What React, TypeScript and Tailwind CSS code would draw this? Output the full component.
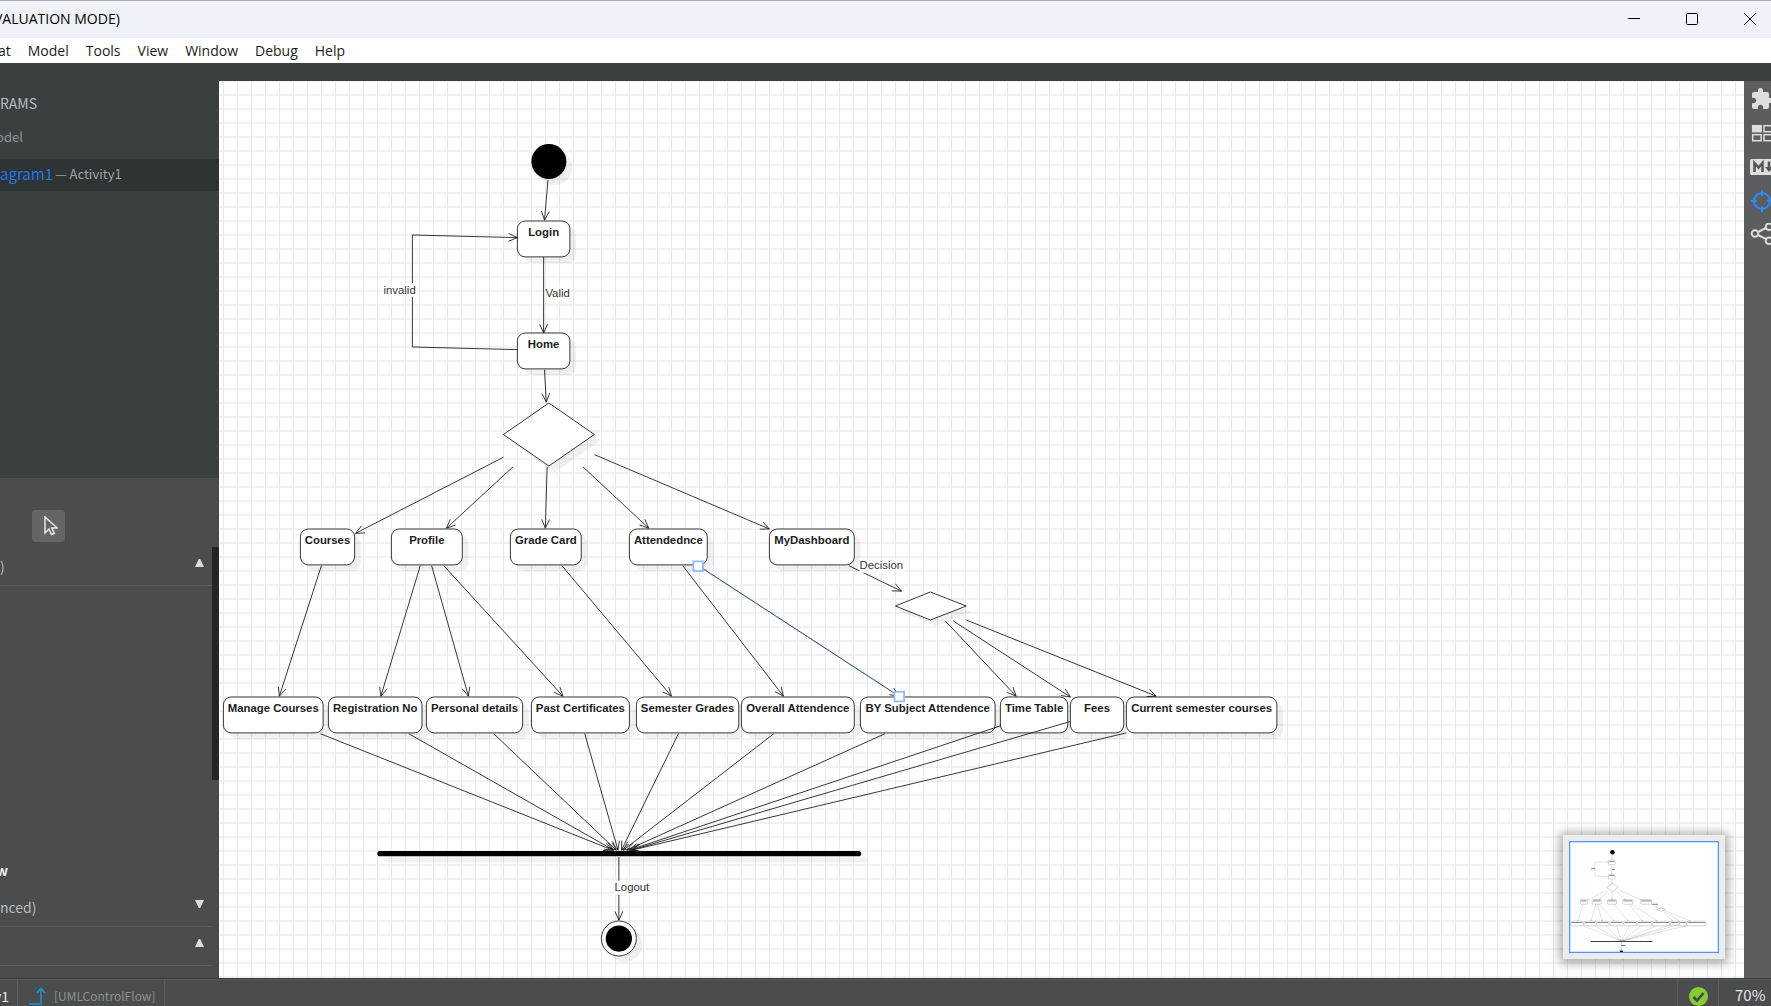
import { MdExtension } from "react-icons/md";

type NodeBox = { label: string; x: number; y: number; w: number };
type Point = [number, number];

const NODE_H = 41;

const nodes: NodeBox[] = [
  { label: "Login", x: 341, y: 160, w: 60 },
  { label: "Home", x: 341, y: 288, w: 60 },
  { label: "Courses", x: 93, y: 512, w: 62 },
  { label: "Profile", x: 197, y: 512, w: 81 },
  { label: "Grade Card", x: 333, y: 512, w: 81 },
  { label: "Attendednce", x: 469, y: 512, w: 89 },
  { label: "MyDashboard", x: 629, y: 512, w: 97 },
  { label: "Manage Courses", x: 5, y: 704, w: 114 },
  { label: "Registration No", x: 125, y: 704, w: 107 },
  { label: "Personal details", x: 237, y: 704, w: 110 },
  { label: "Past Certificates", x: 357, y: 704, w: 112 },
  { label: "Semester Grades", x: 477, y: 704, w: 117 },
  { label: "Overall Attendence", x: 597, y: 704, w: 129 },
  { label: "BY Subject Attendence", x: 733, y: 704, w: 154 },
  { label: "Time Table", x: 893, y: 704, w: 77 },
  { label: "Fees", x: 973, y: 704, w: 61 },
  { label: "Current semester courses", x: 1037, y: 704, w: 172 },
];

const edges: Point[][] = [
  [[376, 113], [372, 159]],
  [[371, 201], [371, 288]],
  [[372, 330], [374, 367]],
  [[341, 307], [221, 304], [221, 176], [341, 179]],
  [[325, 430], [156, 517]],
  [[336, 441], [260, 511]],
  [[375, 441], [373, 511]],
  [[416, 441], [491, 511]],
  [[429, 427], [629, 512]],
  [[720, 554], [780, 583]],
  [[830, 617], [911, 703]],
  [[839, 617], [973, 704]],
  [[854, 616], [1071, 703]],
  [[117, 554], [69, 703]],
  [[230, 554], [185, 703]],
  [[243, 554], [285, 703]],
  [[257, 554], [393, 703]],
  [[392, 554], [517, 703]],
  [[530, 554], [645, 703]],
  [[548, 554], [777, 703]],
  [[116, 746], [450, 879]],
  [[217, 746], [451, 879]],
  [[314, 746], [454, 879]],
  [[418, 746], [456, 879]],
  [[525, 746], [460, 879]],
  [[634, 746], [462, 879]],
  [[761, 746], [466, 879]],
  [[893, 737], [469, 879]],
  [[973, 732], [471, 879]],
  [[1037, 745], [472, 879]],
  [[457, 887], [457, 959]],
];

const labels = [
  { text: "invalid", x: 188, y: 243, w: 38 },
  { text: "Valid", x: 373, y: 247, w: 28 },
  { text: "Decision", x: 732, y: 558, w: 50 },
  { text: "Logout", x: 452, y: 926, w: 41 },
];

function arrowHead(points: Point[]) {
  const [x1, y1] = points[points.length - 2];
  const [x2, y2] = points[points.length - 1];
  const len = Math.hypot(x2 - x1, y2 - y1);
  const ux = (x2 - x1) / len;
  const uy = (y2 - y1) / len;
  const bx = x2 - ux * 10;
  const by = y2 - uy * 10;
  return `${bx - uy * 4.5},${by + ux * 4.5} ${x2},${y2} ${bx + uy * 4.5},${by - ux * 4.5}`;
}

function Shapes({ mini = false }: { mini?: boolean }) {
  const stroke = mini ? "#808080" : "#1c1c1c";
  const sw = mini ? 3 : 1;
  return (
    <>
      {!mini && (
        <g fill="#000" fillOpacity={0.06} transform="translate(7 7)">
          <circle cx={377} cy={92} r={20} />
          <circle cx={457} cy={980} r={20} />
          <polygon points="325,404 377,368 429,404 377,440" />
          <polygon points="773,600 813,584 854,600 813,616" />
          <rect x={181} y={880} width={553} height={6} rx={3} />
        </g>
      )}
      <circle cx={377} cy={92} r={20} />
      <g fill="#fff" stroke={stroke} strokeWidth={sw}>
        <polygon points="325,404 377,368 429,404 377,440" />
        <polygon points="773,600 813,584 854,600 813,616" />
        <circle cx={457} cy={980} r={20} />
      </g>
      <circle cx={457} cy={980} r={15} />
      <rect x={181} y={880} width={553} height={6} rx={3} />
      {nodes.map((n) => (
        <g key={n.label}>
          {!mini && (
            <rect x={n.x + 7} y={n.y + 7} width={n.w} height={NODE_H} rx={9} fill="#000" fillOpacity={0.06} />
          )}
          <rect x={n.x} y={n.y} width={n.w} height={NODE_H} rx={9} fill="#fff" stroke={stroke} strokeWidth={sw} />
          {mini ? (
            <rect x={n.x + 7} y={n.y + 9} width={n.w - 14} height={6} fill="#555" />
          ) : (
            <text x={n.x + n.w / 2} y={n.y + 17} textAnchor="middle" fontSize={13} fontWeight={700} fill="#1c1c1c">
              {n.label}
            </text>
          )}
        </g>
      ))}
      <g fill="none" stroke={stroke} strokeWidth={mini ? 2 : 1}>
        {edges.map((e, i) => (
          <g key={i}>
            <polyline points={e.map((p) => p.join(",")).join(" ")} />
            <polyline points={arrowHead(e)} />
          </g>
        ))}
      </g>
      {labels.map((l) =>
        mini ? (
          <rect key={l.text} x={l.x} y={l.y - 8} width={l.w} height={6} fill="#444" />
        ) : (
          <g key={l.text}>
            <rect x={l.x} y={l.y - 12} width={l.w} height={16} fill="#fff" />
            <text x={l.x} y={l.y} fontSize={13} fill="#333">
              {l.text}
            </text>
          </g>
        )
      )}
    </>
  );
}

function Canvas() {
  return (
    <main className="relative min-w-0 flex-1 overflow-hidden bg-white bg-[linear-gradient(to_right,#e9e9e9_1px,transparent_1px),linear-gradient(to_bottom,#f2f2f2_2px,transparent_2px)] bg-[size:14px_14px] bg-[position:4px_13px]">
      <svg className="block h-full w-full font-['Liberation_Sans',Arial,sans-serif]" role="img" aria-label="Activity diagram">
        <g transform="scale(0.875)">
          <Shapes />
          <line x1={548} y1={554} x2={777} y2={703} stroke="#3b82f6" strokeWidth={1} strokeDasharray="4 3" />
          <g fill="#fff" stroke="#8fbcf8" strokeWidth={2}>
            <rect x={542} y={549} width={11} height={11} />
            <rect x={772} y={698} width={11} height={11} />
          </g>
        </g>
      </svg>
      <div className="absolute right-[19px] bottom-[19px] h-[124px] w-[162px] bg-[#ececec] p-1.5 shadow-[0_1px_10px_3px_rgba(0,0,0,0.35)]">
        <div className="h-full border border-[#4b95ff] bg-white ring-1 ring-[#cfe2ff] ring-inset">
          <svg className="block h-full w-full" viewBox="0 0 1316 978" preserveAspectRatio="xMinYMin slice" aria-hidden="true">
            <Shapes mini />
          </svg>
        </div>
      </div>
    </main>
  );
}

function TitleBar() {
  return (
    <header className="flex h-[38px] shrink-0 items-center justify-between overflow-hidden border-t border-[#a9a9a9] bg-[#f0f2fa] pb-px font-['Open_Sans','Noto_Sans',sans-serif]">
      <h1 className="-ml-1.5 text-sm whitespace-nowrap text-black">VALUATION MODE)</h1>
      <div className="flex h-full text-black">
        <button aria-label="Minimize" className="flex w-[58px] items-center justify-center">
          <svg width="12" height="12" viewBox="0 0 12 12" stroke="currentColor">
            <path d="M0 5.5h12" />
          </svg>
        </button>
        <button aria-label="Maximize" className="flex w-[58px] items-center justify-center">
          <svg width="12" height="12" viewBox="0 0 12 12" fill="none" stroke="currentColor">
            <rect x="0.5" y="0.5" width="11" height="11" rx="1" />
          </svg>
        </button>
        <button aria-label="Close" className="-mr-2 flex w-[58px] items-center justify-center">
          <svg width="12" height="12" viewBox="0 0 12 12" stroke="currentColor">
            <path d="M0 0l12 12M12 0L0 12" />
          </svg>
        </button>
      </div>
    </header>
  );
}

function MenuBar() {
  return (
    <nav className="-ml-0.5 flex h-[25px] shrink-0 items-center gap-[17px] bg-white font-['Open_Sans','Noto_Sans',sans-serif] text-sm text-[#1b1b1b]">
      {["at", "Model", "Tools", "View", "Window", "Debug", "Help"].map((m) => (
        <button key={m}>{m}</button>
      ))}
    </nav>
  );
}

function Triangle({ down = false }: { down?: boolean }) {
  return (
    <svg width="9" height="8" viewBox="0 0 9 8" fill="#dcdcdc" className="mr-2">
      <path d={down ? "M0 0h9L5.2 8H3.8z" : "M0 8h9L5.2 0H3.8z"} />
    </svg>
  );
}

function SectionHeader({ text, down }: { text: string; down?: boolean }) {
  return (
    <button className="flex h-[39px] w-full shrink-0 items-center justify-between border-b border-[#5a5c5e] pb-1.5">
      <span className="pt-1.5">{text}</span>
      <Triangle down={down} />
    </button>
  );
}

function Sidebar() {
  return (
    <aside className="flex w-[219px] shrink-0 flex-col overflow-hidden font-['Noto_Sans_CJK_SC',sans-serif] whitespace-nowrap">
      <section className="flex h-[397px] shrink-0 flex-col bg-[#3a3f41]">
        <h2 className="mt-1 flex h-9 items-center text-sm text-[#b9bbbb]">RAMS</h2>
        <div className="-ml-1 flex h-8 items-center text-[13px] text-[#939696]">odel</div>
        <button className="mt-1.5 flex h-8 items-center gap-0.5 bg-[#2e3333] pb-0.5 text-left">
          <span className="text-[15px] text-[#2277ee]">agram1</span>
          <span className="text-[13px] text-[#a0a3a3]">— Activity1</span>
        </button>
      </section>
      <section className="flex min-h-0 flex-1 flex-col bg-[#4b4c4d] text-sm text-[#b9bbbb]">
        <div className="h-[69px] shrink-0 px-8 pt-8">
          <button aria-label="Select" className="flex h-8 w-[33px] items-center justify-center rounded bg-[#626669] pl-1">
            <svg width="14" height="20" viewBox="0 0 14 20" fill="none" stroke="#e8e8e8" strokeWidth="1.5">
              <path d="M1 1v16l4-4 2.500 5.500 2.800-1.200-2.500-5.300H13.200z" />
            </svg>
          </button>
        </div>
        <div className="flex min-h-0 flex-1">
          <div className="flex flex-1 flex-col">
            <SectionHeader text=")" />
            <div className="-ml-1 flex h-[302px] items-end pb-2">
              <button className="font-bold text-[#eee]">w</button>
            </div>
            <SectionHeader text="nced)" down />
            <SectionHeader text="" />
          </div>
          <div className="w-[7px]">
            <div className="h-[233px] bg-[#252525]" />
          </div>
        </div>
      </section>
    </aside>
  );
}

function RightRail() {
  const cell = "flex h-[34px] shrink-0 items-center";
  return (
    <aside className="flex w-[27px] shrink-0 flex-col overflow-hidden bg-[#5c5d5f] pt-px pl-1.5 text-[#dedede]">
      <button aria-label="Extensions" className={cell}>
        <MdExtension size={24} className="shrink-0" />
      </button>
      <button aria-label="Layout" className={cell}>
        <svg width="24" height="24" viewBox="0 0 24 24" className="shrink-0" fill="none" stroke="currentColor" strokeWidth="1.500">
          <rect x="2.700" y="4.700" width="8.500" height="6" fill="currentColor" />
          <rect x="14" y="4.700" width="8.500" height="6" />
          <rect x="2.700" y="13.700" width="8.500" height="6" />
          <rect x="14" y="13.700" width="8.500" height="6" />
        </svg>
      </button>
      <button aria-label="Markdown" className={cell}>
        <svg width="26" height="24" viewBox="0 0 26 24" className="shrink-0">
          <rect x="0" y="4" width="26" height="16" rx="1.500" fill="currentColor" />
          <g fill="none" stroke="#55585a" strokeWidth="2.600">
            <path d="M4.500 17V8l4 4.500 4-4.500v9" />
            <path d="M19 6.500v7" />
          </g>
          <path d="M15 12h8l-4 5z" fill="#55585a" />
        </svg>
      </button>
      <button aria-label="Navigate" className={cell}>
        <svg width="24" height="24" viewBox="0 0 24 24" className="shrink-0" fill="none" stroke="#2b8cff" strokeWidth="2">
          <circle cx="12" cy="12" r="8" />
          <path d="M12 1v6M12 17v6M1 12h6M17 12h6" />
        </svg>
      </button>
      <button aria-label="Relationships" className={cell}>
        <svg width="24" height="24" viewBox="0 0 24 24" className="shrink-0" fill="none" stroke="currentColor" strokeWidth="2">
          <circle cx="5" cy="10.500" r="3.300" />
          <circle cx="19" cy="3.800" r="3.300" />
          <circle cx="19" cy="17.800" r="3.300" />
          <path d="M8 9l8-4M8 12l8.200 4.200" />
        </svg>
      </button>
    </aside>
  );
}

function StatusBar() {
  return (
    <footer className="flex h-7 shrink-0 border-t border-[#363a3c] bg-[#4b4c4d] font-['Noto_Sans_CJK_SC',sans-serif]">
      <div className="flex min-w-0 flex-1 justify-between overflow-hidden border-t border-[#585b5d]">
        <div className="flex items-center">
          <div className="flex h-full w-[18px] items-center justify-end overflow-hidden border-r border-[#5a5c5e] pt-1.5 pr-2 text-sm text-[#e6e6e6]">
            y1
          </div>
          <div className="flex h-full items-center gap-2 border-r border-[#5a5c5e] pt-1.5 pr-2 pl-2.5 text-xs text-[#8d9091]">
            <svg width="18" height="18" viewBox="0 0 18 18" fill="none" stroke="#1e90e0" strokeWidth="1.500">
              <path d="M1 17h12V2M9 6l4-4.500L17 6" />
            </svg>
            [UMLControlFlow]
          </div>
        </div>
        <div className="flex items-center">
          <div className="flex h-full w-[42px] items-center justify-center border-x border-[#5a5c5e] pt-1.5">
            <svg width="19" height="19" viewBox="0 0 19 19">
              <circle cx="9.500" cy="9.500" r="9.500" fill="#86cb33" />
              <path d="M4.500 10l3.500 3.500L14.500 6" fill="none" stroke="#45494a" strokeWidth="2.600" />
            </svg>
          </div>
          <button className="h-full w-[52px] pt-1 pr-1.5 pl-4 text-left text-[15px] text-[#e6e6e6]">70%</button>
        </div>
      </div>
    </footer>
  );
}

export default function App() {
  return (
    <div className="flex h-screen flex-col overflow-hidden">
      <TitleBar />
      <MenuBar />
      <div className="h-[18px] shrink-0 bg-[#3a3f41]" />
      <div className="flex min-h-0 flex-1">
        <Sidebar />
        <Canvas />
        <RightRail />
      </div>
      <StatusBar />
    </div>
  );
}
